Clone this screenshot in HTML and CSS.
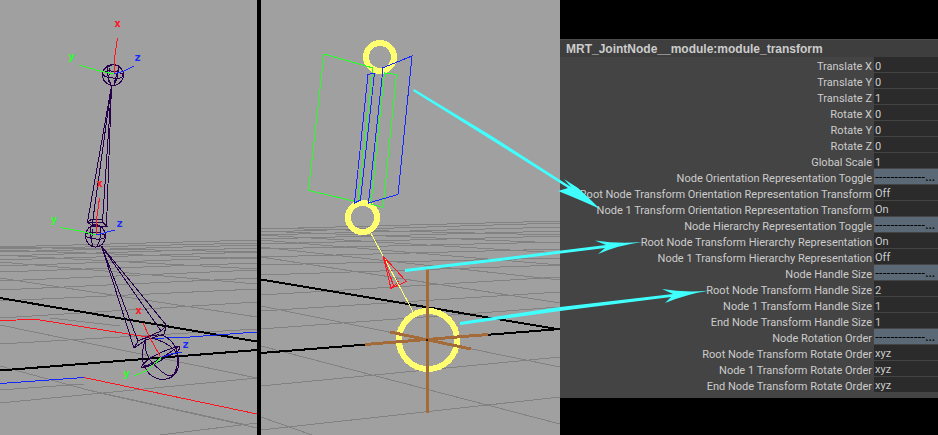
FILE: index.html
```html
<!DOCTYPE html>
<html lang="en">
<head>
<meta charset="utf-8">
<title>MRT_JointNode__module:module_transform</title>
<link rel="stylesheet" href="styles.css">
</head>
<body>
<main class="stage">
  <svg class="viewport" viewBox="0 0 257 435" preserveAspectRatio="xMidYMid slice" role="img" aria-label="Joint chain">
    <g class="grid">
      <path d="M0 247L257 240M0 249L257 243M0 252L257 245M0 256L257 248M0 260L257 252M0 266L257 257M0 272L257 263M0 281L257 270M0 290L257 278M0 301L257 289M0 318L257 302M0 344L257 329M0 403L257 378M0 390L84 384M160 435L257 423"/>
      <path d="M0 247L257 252M0 250L257 259M0 255L257 269M0 262L257 284M0 278L257 317M50 318L120 326M0 325L257 378M0 366L88 390L247 425M100 393L257 428"/>
    </g>
    <path class="black" d="M0 298L257 341.5M0 370.5L257 350"/>
    <path class="red" d="M0 321L25 319.5L37 319.5L150 337.5M84 377.5L257 414"/>
    <path class="blue" d="M152 338.5L190 337L257 332M0 383.5L84 377.5"/>
    <g class="bone">
      <path d="M111.5 86L87.5 222L102.5 222L106.5 226L92 226L87.5 222M111.5 86L92 226M111.5 86L102.5 222M111.5 86L106.5 226M88 222L92 219L102 219"/>
      <ellipse cx="113" cy="75" rx="10.5" ry="10.5"/>
      <path d="M103 72Q112 69 123 74Q123 80 113 78Q101 77 103 72M108 66Q106 74 111 85M118 66Q119 77 114 85M118 66Q112 63 108 67M110 68L108 82M119 67L114 84"/>
      <ellipse cx="95.5" cy="236" rx="10" ry="11"/>
      <path d="M86 234Q95 230 105 235Q106 240 96 239Q84 238 86 234M91 227Q89 235 93 246M100 226Q102 238 97 246M100 226Q95 222 90 228M93 229L91 243"/>
      <path d="M101.500 246L134 348L146 340L164 334L166.500 325.500L161 331L138 341L134 348M101.500 246L138 341M101.500 246L161 331M101.500 246L166.500 325.500"/>
      <path d="M146 338Q156 333 164 336Q178 343 179 362Q178 379 162 379.500Q146 378 142 358Q143 345 146 338M146 338Q142 356 159 369Q169 379 174 374M151 338Q171 343 177 354Q180 363 174 374M141 368Q159 361 179 346Q182 351 168 356Q153 366 141 368M141 368Q146 356 179 346"/>
    </g>
    <path class="red" d="M114 74L114 62L117.500 38M96 235L97 216L99.500 198M161 357.500L150 338L143 323"/>
    <path class="green" d="M114 74L96 70L79 65M96 235L80 231L60 227.500M161 357.500L148 370L134 376"/>
    <path class="blue" d="M114 74L124 71L134 66M96 235L115 230M161 357.500L171 354L182 352"/>
    <g class="axis-label">
      <text class="x" x="117.500" y="27">x</text><text class="y" x="71.500" y="60">y</text><text class="z" x="137.500" y="61">z</text>
      <text class="x" x="99.500" y="187">x</text><text class="y" x="54" y="223">y</text><text class="z" x="119.500" y="227">z</text>
      <text class="x" x="138.500" y="314">x</text><text class="y" x="126.500" y="377">y</text><text class="z" x="185.500" y="348">z</text>
    </g>
  </svg>
  <svg class="viewport" viewBox="261 0 299 435" preserveAspectRatio="xMidYMid slice" role="img" aria-label="Module handles">
    <g class="grid">
      <path d="M261 229L560 221M261 232L560 223M261 235L560 227M261 239L560 231M261 244L560 236M261 249L560 242M261 257L560 249M261 265L560 258M261 275L560 265M261 295L560 277M261 311L560 292M261 329L560 307M261 386L560 357M261 430L560 397"/>
      <path d="M261 228L560 235M261 231L560 243M261 235L560 253M261 240L560 265M261 247L560 280M261 257L560 303M261 306L560 367M261 346L560 424M261 417L312 435"/>
    </g>
    <path class="black" d="M261 279.500L560 329.500M261 353L560 329"/>
    <g class="ring">
      <circle cx="380" cy="57" r="14"/><circle cx="362.500" cy="217.500" r="14.500"/><circle cx="428" cy="340" r="29"/>
    </g>
    <path class="green" d="M324 54L373 68L358 202L308.500 190.500ZM384.500 73L396.500 74.500L383 207.500L371 204Z"/>
    <path class="blue" d="M382.500 73L382.500 68L412 56L398 194.500L368.500 203L382.500 73M374.500 73L368 74.500L354.500 203L360.500 200L374.500 73"/>
    <path class="yellow" d="M371 233.500L413 311.500"/>
    <path class="red" d="M383 256L391 288.500L406.500 281.500L383 256L399 285M383 256L394 287M391 288.500L399 281"/>
    <path class="yellow" d="M386 261L399 286"/>
    <path class="brown" d="M427.500 269L427.500 413M365 344.500L488 334.500M390 332L471 349"/>
    <circle cx="427" cy="340" r="1"/>
  </svg>
  <form class="panel">
    <h1>MRT_JointNode__module:module_transform</h1>
    <div class="row"><label for="tx">Translate X</label><input id="tx" value="0"></div>
    <div class="row"><label for="ty">Translate Y</label><input id="ty" value="0"></div>
    <div class="row"><label for="tz">Translate Z</label><input id="tz" value="1"></div>
    <div class="row"><label for="rx">Rotate X</label><input id="rx" value="0"></div>
    <div class="row"><label for="ry">Rotate Y</label><input id="ry" value="0"></div>
    <div class="row"><label for="rz">Rotate Z</label><input id="rz" value="0"></div>
    <div class="row"><label for="gs">Global Scale</label><input id="gs" value="1"></div>
    <div class="row divider"><label for="ot">Node Orientation Representation Toggle</label><select id="ot"><option>-------------...</option></select></div>
    <div class="row"><label for="o0">Root Node Transform Orientation Representation Transform</label><select id="o0"><option>Off</option><option>On</option></select></div>
    <div class="row"><label for="o1">Node 1 Transform Orientation Representation Transform</label><select id="o1"><option>On</option><option>Off</option></select></div>
    <div class="row divider"><label for="ht">Node Hierarchy Representation Toggle</label><select id="ht"><option>-------------...</option></select></div>
    <div class="row"><label for="h0">Root Node Transform Hierarchy Representation</label><select id="h0"><option>On</option><option>Off</option></select></div>
    <div class="row"><label for="h1">Node 1 Transform Hierarchy Representation</label><select id="h1"><option>Off</option><option>On</option></select></div>
    <div class="row divider"><label for="hs">Node Handle Size</label><select id="hs"><option>-------------...</option></select></div>
    <div class="row"><label for="s0">Root Node Transform Handle Size</label><input id="s0" value="2"></div>
    <div class="row"><label for="s1">Node 1 Transform Handle Size</label><input id="s1" value="1"></div>
    <div class="row"><label for="s2">End Node Transform Handle Size</label><input id="s2" value="1"></div>
    <div class="row divider"><label for="ro">Node Rotation Order</label><select id="ro"><option>-------------...</option></select></div>
    <div class="row"><label for="r0">Root Node Transform Rotate Order</label><select id="r0"><option>xyz</option></select></div>
    <div class="row"><label for="r1">Node 1 Transform Rotate Order</label><select id="r1"><option>xyz</option></select></div>
    <div class="row"><label for="r2">End Node Transform Rotate Order</label><select id="r2"><option>xyz</option></select></div>
  </form>
  <svg class="pointers" viewBox="0 0 938 435" preserveAspectRatio="none" aria-hidden="true">
    <path d="M414 89L490 135L571 187L564 179L578 188Q589 198 600 209Q583 201 558 191L568 188L490 139L413 91Z"/>
    <path d="M405 269L500 258L606 245L595 240.500Q618 244 642 242Q619 245 598 254L605 248L500 261L405 272Z"/>
    <path d="M460 322L560 307L673 294L662 289Q685 293 710 290.500Q687 294 665 303L671 297L560 311L460 325Z"/>
  </svg>
</main>
</body>
</html>
```
FILE: styles.css
```css
* { box-sizing: border-box; }
body { margin: 0; background: #000; }
.stage {
  position: relative;
  display: grid;
  grid-template-columns: minmax(0, 257fr) 4px minmax(0, 299fr) minmax(0, 378fr);
  min-height: 100vh;
}
.viewport {
  width: 100%;
  height: 100%;
  min-height: 0;
  background: #a0a0a0;
}
.viewport:first-child { grid-column: 1; }
.viewport:nth-child(2) { grid-column: 3; }
.viewport path, .viewport ellipse, .ring circle { fill: none; shape-rendering: crispEdges; }
.grid { stroke: #828282; }
.black { stroke: #000; stroke-width: 2; }
.red { stroke: #ff1420; }
.green { stroke: #28ff28; }
.blue { stroke: #1428ff; }
.yellow { stroke: #ffff70; }
.bone { stroke: #26004a; }
.ring { stroke: #ffff70; stroke-width: 6; }
.brown { stroke: #a46a38; stroke-width: 3; }
.axis-label { font: bold 11px "DejaVu Sans Mono", monospace; text-anchor: middle; }
.axis-label .x { fill: #ff1420; }
.axis-label .y { fill: #28ff28; }
.axis-label .z { fill: #1428ff; }
.pointers {
  position: absolute;
  inset: 0;
  width: 100%;
  height: 100%;
  fill: #40ffff;
  pointer-events: none;
}
.panel {
  grid-column: 4;
  align-self: start;
  margin-top: 39px;
  padding-bottom: 5px;
  background: #444;
  color: #ccc;
  font: 11px/16px Roboto, sans-serif;
}
.panel h1 {
  margin: 0;
  padding: 2px 6px 0;
  border-top: 1px solid #4c4c4c;
  background: #3e3e3e;
  font: bold 12px/15px "Liberation Sans", sans-serif;
  white-space: nowrap;
}
.row {
  display: grid;
  grid-template-columns: 1fr 64px;
  column-gap: 2px;
  height: 16px;
}
.row label { padding-top: 2px; text-align: right; white-space: nowrap; }
.row input, .row select {
  appearance: none;
  width: 100%;
  height: 15px;
  margin: 0;
  padding: 3px 0 0 1px;
  border: 0;
  border-radius: 0;
  background: #2b2b2b;
  color: #ccc;
  font: 11px/12px Roboto, sans-serif;
}
.row.divider select {
  padding-top: 0;
  background: #5b6876;
  color: #000;
  font: 12px/15px "Noto Sans", sans-serif;
}
```
